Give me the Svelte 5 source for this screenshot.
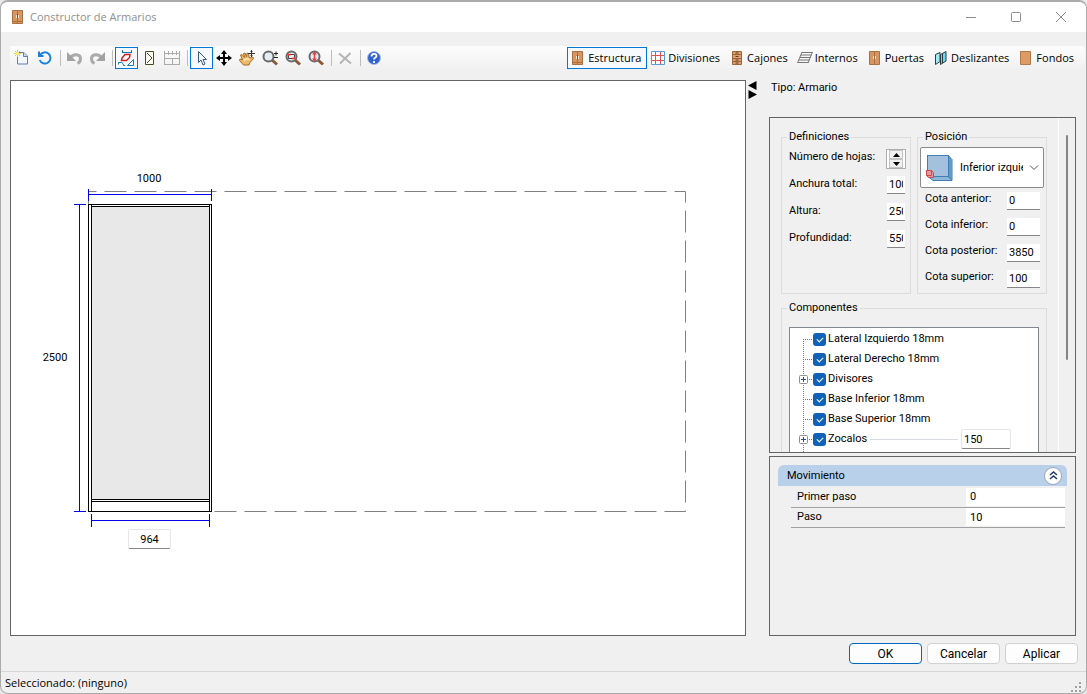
<script>
  const tools = [
    'new', 'refresh', '|', 'undo', 'redo', '|', 'profile', 'section', 'grid', '|',
    'pointer', 'move', 'hand', 'zoom', 'zoomwindow', 'zoomall', '|', 'delete', '|', 'help'
  ];
  const toolNames = {
    new: 'Nuevo', refresh: 'Actualizar', undo: 'Deshacer', redo: 'Rehacer', profile: 'Perfil',
    section: 'Sección', grid: 'Cotas', pointer: 'Seleccionar', move: 'Mover', hand: 'Encuadrar',
    zoom: 'Zoom', zoomwindow: 'Zoom ventana', zoomall: 'Zoom extensión', delete: 'Eliminar', help: 'Ayuda'
  };
  let pressed = $state({ profile: true, pointer: true });

  const tabs = ['Estructura', 'Divisiones', 'Cajones', 'Internos', 'Puertas', 'Deslizantes', 'Fondos'];
  let activeTab = $state('Estructura');

  const sizes = [
    { id: 'anchura', label: 'Anchura total:', value: '1000' },
    { id: 'altura', label: 'Altura:', value: '2500' },
    { id: 'profundidad', label: 'Profundidad:', value: '550' }
  ];
  const offsets = [
    { id: 'anterior', label: 'Cota anterior:', value: '0' },
    { id: 'inferior', label: 'Cota inferior:', value: '0' },
    { id: 'posterior', label: 'Cota posterior:', value: '3850' },
    { id: 'superior', label: 'Cota superior:', value: '100' }
  ];
  const parts = [
    { name: 'Lateral Izquierdo 18mm' },
    { name: 'Lateral Derecho 18mm' },
    { name: 'Divisores', expandable: true },
    { name: 'Base Inferior 18mm' },
    { name: 'Base Superior 18mm' },
    { name: 'Zocalos', expandable: true, value: '150' }
  ];
  const steps = [
    { id: 'primer', label: 'Primer paso', value: '0' },
    { id: 'paso', label: 'Paso', value: '10' }
  ];
</script>

{#snippet lens()}
  <path d="M10 10l5 4.500" stroke="#8a5a3a" stroke-width="3" />
  <circle cx="6.500" cy="6.500" r="5" fill="#e4edf3" stroke="#6a6a6a" stroke-width="2" />
{/snippet}

{#snippet toolIcon(name)}
  <svg width="16" height="16" viewBox="0 0 16 16" fill="none" aria-hidden="true">
    {#if name === 'new'}
      <path d="M3.500 2.500h6.500l3.500 3.500v8h-10z" fill="#f2f6fc" stroke="#5f7fb4" />
      <path d="M9.500 2.500v4h4" fill="#c9d8ee" stroke="#5f7fb4" />
      <path d="M3.500 0v7M0 3.500h7M1 1l5 5M6 1l-5 5" stroke="#e6c62a" />
      <circle cx="3.500" cy="3.500" r="1.500" fill="#fff6a0" />
    {:else if name === 'refresh'}
      <path d="M3 5.200A5.600 5.600 0 1 1 2.700 10" stroke="#1a82dc" stroke-width="2" />
      <path d="M2 1.500v4.500h4.500" stroke="#1a82dc" stroke-width="2" />
    {:else if name === 'undo' || name === 'redo'}
      <g transform={name === 'redo' ? 'matrix(-1 0 0 1 17 0)' : undefined}>
        <path d="M4 8C7 3.500 14.500 3.500 14.500 9c0 2-1 3.500-3 4.500" stroke="#ababab" stroke-width="3" />
        <path d="M1 2v9h9z" fill="#a2a2a2" />
      </g>
    {:else if name === 'profile'}
      <path d="M4.500 0v3M13.500 0v3M4 2.500h10" stroke="#1478be" />
      <path d="M3.500 10.500l.5-2.500 3-3.500h5l-.5 3-3 3z" fill="#fff" stroke="#d22020" stroke-width="1.500" />
      <path d="M9.500 15.500l6-6v6z" fill="#fff" stroke="#1478be" />
      <path d="M.5 14.500v-2h3l1.500 1 .5 2h1.500" stroke="#1478be" />
    {:else if name === 'section'}
      <path d="M4.500 1.500h8v13h-8z" fill="#fbfbf3" stroke="#4a4a20" />
      <path d="M6 3l5 5-5 5" stroke="#4a4a20" />
    {:else if name === 'grid'}
      <path d="M0 3.500h16M0 8.500h16M0 14.500h16M.5 1v14M8 8v7M15.500 1v14M4.500 1v4M8.500 1v4M12.500 1v4" stroke="#ababab" shape-rendering="crispEdges" />
    {:else if name === 'pointer'}
      <path d="M5.500 1.500v11l2.500-2.500 2 5 2-1-2-4.500h3.500z" fill="#f4f8fd" stroke="#3b5687" />
    {:else if name === 'move'}
      <path d="M8 2v12M2 8h12" stroke="#000" stroke-width="2" shape-rendering="crispEdges" />
      <path d="M8 0l3 4H5zM8 16l3-4H5zM0 8l4-3v6zM16 8l-4-3v6z" fill="#000" />
    {:else if name === 'hand'}
      <path d="M4.500 15l-4-4.500.5-1.500 2.500 1-2-5 1.500-.5 2.500 3-1-4 1.500-.5 1.500 4 .5-4 1.500.5.500 4 2 .5 2-1 .5 1.500-3.500 4-1 2.500z" fill="#eeb968" stroke="#a66b26" />
      <path d="M4.500 10.500c1-1 4-2 6-1" stroke="#fbe0a8" stroke-width="2" />
      <path d="M12.500 0v7M9 3.500h7M11.500 1.500h2M11.500 5.500h2" stroke="#333" />
    {:else if name === 'zoom'}
      {@render lens()}
      <path d="M12 3.500h4M14 1.500v4M12 7.500h4" stroke="#222" />
    {:else if name === 'zoomwindow'}
      {@render lens()}
      <path d="M3.500 4.500h6v4h-6z" stroke="#444" />
      <path d="M3 4.500h3M7 8.500h3M3.500 4v2M9.500 7v2" stroke="#e33434" stroke-width="1.500" />
    {:else if name === 'zoomall'}
      {@render lens()}
      <path d="M6.500 3.500v6" stroke="#f03a3a" stroke-width="1.500" />
      <path d="M6.500 1.500L9 4.500H4zM6.500 11.500L9 8.500H4z" fill="#f03a3a" />
    {:else if name === 'delete'}
      <path d="M2 3.500l12 10M13.500 3L3 13.500" stroke="#b4b4b4" stroke-width="2" />
    {:else if name === 'help'}
      <circle cx="8" cy="8" r="6.500" fill="#2f62cc" stroke="#a9bce6" />
      <path d="M5.500 6.500c0-3.500 5-3.500 5-.5 0 1.500-2.500 1.500-2.500 3.500M8 11v2" stroke="#fff" stroke-width="1.800" />
    {/if}
  </svg>
{/snippet}

{#snippet cabinet()}
  <path d="M2.500 1.500h10v13h-10z" fill="#d99560" stroke="#a9713f" />
  <path d="M7.500 2v12" stroke="#a9713f" />
  <path d="M6.500 6v3M8.500 6v3" stroke="#f4e4d2" />
{/snippet}

{#snippet tabIcon(name)}
  <svg width="16" height="16" viewBox="0 0 16 16" fill="none" aria-hidden="true">
    {#if name === 'Estructura'}
      {@render cabinet()}
      <path d="M3 12.500h9" stroke="#a9713f" />
      <path d="M7.500 5v4" stroke="#555" />
    {:else if name === 'Divisiones'}
      <path d="M1.500 1.500h13v13h-13z" fill="#fff" stroke="#5b9bd5" />
      <path d="M5.500 2v12M10.500 2v12M2 5.500h12M2 10.500h12" stroke="#d9534f" />
    {:else if name === 'Cajones'}
      <path d="M3.500 1.500h9v13h-9z" fill="#e0a070" stroke="#9a6538" />
      <path d="M3 4.500h10M3 8.500h10M3 11.500h10" stroke="#9a6538" />
      <path d="M6.500 3h3M6.500 6.500h3M6.500 10h3M6.500 13h3" stroke="#5e3b1c" />
    {:else if name === 'Internos'}
      <path d="M5 2.500h10.500M4 5h10.500M3 7.500h10.500M2 10h10.500M1 12.500h10.500M5 2L.5 13M15.500 2L11 13" stroke="#777" />
    {:else if name === 'Puertas'}
      {@render cabinet()}
    {:else if name === 'Deslizantes'}
      <path d="M2.500 4.500L7 2.500v9l-4.500 3z" fill="#a5ebf7" stroke="#2d3b3f" />
      <path d="M7.500 4.500l5.500-3v9.500l-5.500 3.500z" fill="#6fd8f0" stroke="#2d3b3f" />
      <path d="M9.500 3.500v9.500" stroke="#2d3b3f" />
    {:else}
      <path d="M2.500 1.500h10v13h-10z" fill="#e09a66" stroke="#b07a48" />
    {/if}
  </svg>
{/snippet}

<div class="window">
  <header class="titlebar">
    <svg width="16" height="16" viewBox="0 0 16 16" fill="none" aria-hidden="true">
      {@render cabinet()}
      <path d="M3 12.500h9" stroke="#a9713f" />
      <path d="M7.500 5v4" stroke="#555" />
    </svg>
    <h1>Constructor de Armarios</h1>
    <div class="controls">
      <button aria-label="Minimizar"><svg width="12" height="12" viewBox="0 0 12 12"><path d="M1 6.500h10" /></svg></button>
      <button aria-label="Maximizar"><svg width="12" height="12" viewBox="0 0 12 12"><rect x="1.500" y="1.500" width="9" height="9" rx="1" /></svg></button>
      <button aria-label="Cerrar"><svg width="12" height="12" viewBox="0 0 12 12"><path d="M1 1l10 10M11 1L1 11" /></svg></button>
    </div>
  </header>

  <nav class="toolbar">
    <div class="tools">
      {#each tools as tool}
        {#if tool === '|'}
          <span class="sep"></span>
        {:else}
          <button class="tool" class:on={pressed[tool]} aria-label={toolNames[tool]}>{@render toolIcon(tool)}</button>
        {/if}
      {/each}
    </div>
    <div class="tabs">
      {#each tabs as tab}
        <button class="tab" class:on={activeTab === tab} onclick={() => (activeTab = tab)}>
          {@render tabIcon(tab)}<span>{tab}</span>
        </button>
      {/each}
    </div>
  </nav>

  <main>
    <section class="canvas">
      <svg class="drawing" width="734" height="554" viewBox="0 0 734 554" fill="none">
        <path class="room" d="M77.500 110.500h597v320h-597z" />
        <rect x="77.500" y="123.500" width="123" height="307" fill="#fff" stroke="#000" />
        <rect x="80.500" y="125.500" width="118" height="293" fill="#e8e8e8" stroke="#000" />
        <path d="M80.500 123.500v307M198.500 123.500v307M80.500 420.500h118" stroke="#000" />
        <path class="dim" d="M77.500 108v12M200.500 108v12M77.500 113.500h123" />
        <path class="dim" d="M63 123.500h12M63 430.500h12M68.500 123.500v307" />
        <path class="dim" d="M80.500 433v13M198.500 433v13M80.500 439.500h118" />
        <text x="138" y="101" text-anchor="middle">1000</text>
        <text x="44" y="280" text-anchor="middle">2500</text>
      </svg>
      <input class="field inner-width" aria-label="Anchura interior" value="964" />
    </section>

    <div class="splitter">
      <button aria-label="Ampliar panel"><svg width="9" height="9" viewBox="0 0 9 9"><path d="M8.500 0v9L0 4.500z" /></svg></button>
      <button aria-label="Reducir panel"><svg width="9" height="9" viewBox="0 0 9 9"><path d="M.5 0v9L9 4.500z" /></svg></button>
    </div>

    <aside>
      <p class="kind">Tipo: Armario</p>

      <div class="panel props">
        <div class="content">
          <div class="pair">
            <fieldset>
              <legend>Definiciones</legend>
              <div class="sizes">
                <span class="name">Número de hojas:</span>
                <div class="spinner">
                  <button aria-label="Más hojas"><svg width="7" height="4" viewBox="0 0 7 4"><path d="M3.500 0L7 4H0z" /></svg></button>
                  <button aria-label="Menos hojas"><svg width="7" height="4" viewBox="0 0 7 4"><path d="M0 0h7L3.500 4z" /></svg></button>
                </div>
                {#each sizes as s}
                  <label class="name" for={s.id}>{s.label}</label>
                  <input class="field" id={s.id} value={s.value} />
                {/each}
              </div>
            </fieldset>
            <fieldset>
              <legend>Posición</legend>
              <div class="combo">
                <svg width="28" height="28" viewBox="0 0 28 28" fill="none" aria-hidden="true">
                  <path d="M2 1.500h20l4 4v21H7l-5-4z" fill="#8fb4d6" stroke="#3d7fb5" />
                  <path d="M22.500 1.500l1.500 2v21M26 26L22 22.500" stroke="#3d7fb5" />
                  <rect x="1.500" y="1.500" width="21" height="21" fill="#a3c1dd" stroke="#3d7fb5" />
                  <path d="M.5 16.500h5l2 2v5h-5l-2-2z" fill="#e49a9c" stroke="#cc4a4a" />
                  <path d="M.5 16.500h5v5h-5z" stroke="#cc4a4a" />
                </svg>
                <select aria-label="Posición"><option>Inferior izquierda</option></select>
                <svg class="chevron" width="10" height="6" viewBox="0 0 10 6" fill="none" aria-hidden="true"><path d="M1 .5l4 4 4-4" stroke="#555" /></svg>
              </div>
              <div class="offsets">
                {#each offsets as o}
                  <label class="name" for={o.id}>{o.label}</label>
                  <input class="field" id={o.id} value={o.value} />
                {/each}
              </div>
            </fieldset>
          </div>
          <fieldset class="components">
            <legend>Componentes</legend>
            <ul class="tree">
              {#each parts as part, i}
                <li>
                  <svg width="23" height="20" viewBox="0 0 23 20" fill="none" aria-hidden="true">
                    <path class="dots" d="M13.500 {i === 0 ? 10 : 0}V20M13 10.500h9" />
                    {#if part.expandable}
                      <rect x="9.500" y="6.500" width="8" height="8" rx="1" fill="#fff" stroke="#8f8f8f" />
                      <path d="M11 10.500h5M13.500 8v5" stroke="#2b4a96" />
                    {/if}
                  </svg>
                  <label><input type="checkbox" checked />{part.name}</label>
                  {#if part.value}
                    <span class="rule"></span>
                    <input class="field" aria-label={part.name} value={part.value} />
                  {/if}
                </li>
              {/each}
              <li><svg width="23" height="20" viewBox="0 0 23 20" fill="none" aria-hidden="true"><path class="dots" d="M13.500 0V20" /></svg></li>
            </ul>
          </fieldset>
        </div>
        <div class="scroll"><span></span></div>
      </div>

      <div class="panel motion">
        <div class="head">
          <h2>Movimiento</h2>
          <button aria-label="Contraer">
            <svg width="9" height="9" viewBox="0 0 9 9" fill="none"><path d="M1 4l3.500-3L8 4M1 8l3.500-3L8 8" stroke="#1f3566" stroke-width="1.500" /></svg>
          </button>
        </div>
        <table>
          <tbody>
            {#each steps as s}
              <tr>
                <th scope="row"><label for={s.id}>{s.label}</label></th>
                <td><input id={s.id} value={s.value} /></td>
              </tr>
            {/each}
          </tbody>
        </table>
      </div>
    </aside>
  </main>

  <div class="actions">
    <button class="default">OK</button>
    <button>Cancelar</button>
    <button>Aplicar</button>
  </div>

  <footer>
    <span>Seleccionado: (ninguno)</span>
    <svg width="11" height="11" viewBox="0 0 11 11" aria-hidden="true">
      <path d="M8 0h2v2H8zM4 4h2v2H4zM8 4h2v2H8zM0 8h2v2H0zM4 8h2v2H4zM8 8h2v2H8z" fill="#a0a0a0" />
    </svg>
  </footer>
</div>

<style>
  :global(body) {
    margin: 0;
    background: #e9e9e9;
  }
  .window {
    box-sizing: border-box;
    display: flex;
    flex-direction: column;
    height: 100vh;
    border: 1px solid #ababab;
    border-top-width: 2px;
    border-radius: 8px;
    overflow: hidden;
    background: #f0f0f0;
    color: #000;
    font: 11px/16px Roboto, sans-serif;
  }
  button,
  input,
  select {
    box-sizing: border-box;
    margin: 0;
    padding: 0;
    border: 0;
    border-radius: 0;
    background: none;
    color: inherit;
    font: inherit;
  }
  svg {
    display: block;
    flex: none;
  }
  h1,
  h2,
  p,
  ul {
    margin: 0;
    padding: 0;
    font: inherit;
  }

  .titlebar {
    display: flex;
    align-items: center;
    gap: 4px;
    height: 30px;
    padding: 0 3px 0 9px;
    background: #fff;
    color: #8f8f8f;
    font: 11px/16px "Open Sans", sans-serif;
  }
  .controls {
    display: flex;
    margin-left: auto;
  }
  .controls button {
    display: grid;
    place-items: center;
    width: 45px;
    height: 28px;
  }
  .controls path,
  .controls rect {
    fill: none;
    stroke: #8c8c8c;
  }

  .toolbar {
    display: flex;
    justify-content: space-between;
    margin: 14px 1px 0 9px;
    padding: 0 5px 0 1px;
    height: 24px;
    border-radius: 0 3px 3px 0;
    background: linear-gradient(#fdfdfd, #f0f0f0);
    font: 11px/16px "Open Sans", sans-serif;
  }
  .tools,
  .tabs {
    display: flex;
    align-items: center;
  }
  .tool,
  .tab {
    display: flex;
    align-items: center;
    height: 22px;
    border: 1px solid transparent;
  }
  .tool {
    width: 23px;
    padding-left: 2px;
  }
  .tab {
    gap: 2px;
    padding: 0 5px 0 2px;
  }
  .on {
    border-color: #0078d7;
    background: #f7fafd;
  }
  .sep {
    box-sizing: border-box;
    width: 4px;
    height: 16px;
    margin-right: 2px;
    border-right: 1px solid #bdbdbd;
  }

  main {
    display: grid;
    grid-template-columns: minmax(0, 1fr) 23px 307px;
    flex: 1;
    min-height: 0;
    padding: 10px 10px 0 9px;
  }
  .canvas {
    position: relative;
    overflow: hidden;
    border: 1px solid #646464;
    background: #fff;
  }
  .room {
    stroke: #808080;
    stroke-dasharray: 22 8;
    stroke-dashoffset: 14;
  }
  .dim {
    stroke: #0000e6;
  }
  .drawing text {
    fill: #000;
  }
  .field {
    height: 18px;
    padding: 0 2px;
    border-bottom: 1px solid #868686;
    background: #fff;
  }
  .inner-width {
    position: absolute;
    left: 117px;
    top: 448px;
    width: 43px;
    height: 20px;
    border: 1px solid #e6e6e6;
    border-bottom-color: #868686;
    border-radius: 2px;
    text-align: center;
  }

  .splitter {
    display: flex;
    flex-direction: column;
    align-items: flex-start;
    padding: 1px 0 0 2px;
  }
  .splitter path {
    fill: #000;
  }

  aside {
    display: grid;
    grid-template-rows: 34px minmax(0, 336fr) minmax(0, 180fr);
    gap: 3px;
    min-height: 0;
  }
  .kind {
    padding-left: 2px;
  }
  .panel {
    overflow: hidden;
    border: 1px solid #646464;
  }
  .props {
    display: flex;
  }
  .motion {
    padding: 8px;
  }
  .content {
    flex: 1;
    min-width: 0;
    padding: 11px 11px 0;
  }
  .scroll {
    box-sizing: border-box;
    width: 17px;
    padding: 17px 0 0 7px;
    border-left: 1px solid #fff;
  }
  .scroll span {
    display: block;
    width: 2px;
    height: 71%;
    border-radius: 1px;
    background: #858585;
  }

  fieldset {
    box-sizing: border-box;
    min-width: 0;
    margin: 0;
    padding: 0;
    border: 1px solid #dcdcdc;
  }
  legend {
    margin-left: 5px;
    padding: 0 2px;
  }
  .pair {
    display: grid;
    grid-template-columns: 1fr 1fr;
    gap: 6px;
    margin-bottom: 6px;
  }
  .sizes,
  .offsets {
    display: grid;
    align-items: start;
  }
  .sizes {
    grid-template-columns: 1fr 20px;
    grid-auto-rows: 27px;
    padding: 0 4px 0 7px;
    justify-items: center;
  }
  .sizes .name {
    justify-self: start;
    line-height: 24px;
    white-space: nowrap;
  }
  .sizes .field {
    width: 18px;
    margin-top: 4px;
  }
  .offsets {
    grid-template-columns: 1fr 33px;
    grid-auto-rows: 26px;
    padding: 0 6px 1px 7px;
  }
  .offsets .name {
    line-height: 22px;
    white-space: nowrap;
  }
  .offsets .field {
    width: 33px;
    margin-top: 4px;
  }
  .spinner {
    box-sizing: border-box;
    display: grid;
    width: 20px;
    height: 20px;
    margin-top: 4px;
    padding: 0 2px;
    border: 1px solid #adadad;
    background: #fff;
  }
  .spinner button {
    display: grid;
    place-items: center;
    border: 1px solid #c4c4c4;
    background: #f0f0f0;
  }
  .combo {
    box-sizing: border-box;
    display: flex;
    align-items: center;
    height: 41px;
    margin: 2px 2px 0;
    padding: 0 4px 0 5px;
    border: 1px solid #8a8a8a;
    border-radius: 2px;
    background: #fff;
  }
  .combo select {
    flex: 1;
    min-width: 0;
    height: 24px;
    margin: 0 6px;
    appearance: none;
    text-overflow: clip;
  }

  .components {
    padding: 0 7px 8px;
  }
  .components legend {
    margin-left: -2px;
  }
  .tree {
    margin-top: 11px;
    padding: 1px 0 12px;
    border: 1px solid #828790;
    background: #fff;
    list-style: none;
  }
  .tree li {
    display: flex;
    align-items: center;
    height: 20px;
    padding-right: 27px;
  }
  .tree label {
    display: flex;
    align-items: center;
    gap: 2px;
  }
  .tree [type='checkbox'] {
    position: relative;
    width: 13px;
    height: 13px;
    appearance: none;
    border-radius: 3px;
    background: #0f62b8;
  }
  .tree [type='checkbox']:checked::after {
    content: '';
    position: absolute;
    left: 4px;
    top: 4px;
    width: 5px;
    height: 3px;
    border: solid #fff;
    border-width: 0 0 1px 1px;
    transform: rotate(-45deg);
  }
  .dots {
    stroke: #777;
    stroke-dasharray: 1 1;
    shape-rendering: crispEdges;
  }
  .rule {
    flex: 1;
    height: 1px;
    margin: 0 3px;
    background: #d5dbe0;
  }
  .tree .field {
    width: 50px;
    height: 20px;
    border: 1px solid #e6e6e6;
    border-bottom-color: #868686;
    border-radius: 2px;
  }

  .head {
    display: flex;
    align-items: center;
    justify-content: space-between;
    height: 21px;
    padding: 0 5px 0 9px;
    border-radius: 6px 6px 0 0;
    background: #b9d0ea;
  }
  .head button {
    display: grid;
    place-items: center;
    width: 18px;
    height: 18px;
    border: 1px solid #9aa6b8;
    border-radius: 50%;
    background: #fff;
  }
  table {
    width: calc(100% - 15px);
    margin: 1px 2px 0 13px;
    border-collapse: collapse;
  }
  tr {
    height: 20px;
    border-bottom: 1px solid #a0a0a0;
  }
  th {
    padding: 0 0 0 6px;
    text-align: left;
    font-weight: 400;
  }
  td {
    width: 99px;
    padding: 0;
  }
  td input {
    display: block;
    width: 100%;
    height: 18px;
    padding: 0 4px;
    background: #fff;
  }

  .actions {
    display: flex;
    justify-content: flex-end;
    gap: 5px;
    padding: 7px 8px;
  }
  .actions button {
    width: 73px;
    height: 21px;
    border: 1px solid #d0d0d0;
    border-radius: 4px;
    background: #fdfdfd;
    font-size: 12px;
  }
  .actions .default {
    border-color: #0067c0;
  }
  footer {
    display: flex;
    align-items: center;
    justify-content: space-between;
    height: 21px;
    padding: 0 4px;
    border-top: 1px solid #d7d7d7;
    font: 11px/16px "Open Sans", sans-serif;
  }
  footer svg {
    align-self: flex-end;
  }
</style>
